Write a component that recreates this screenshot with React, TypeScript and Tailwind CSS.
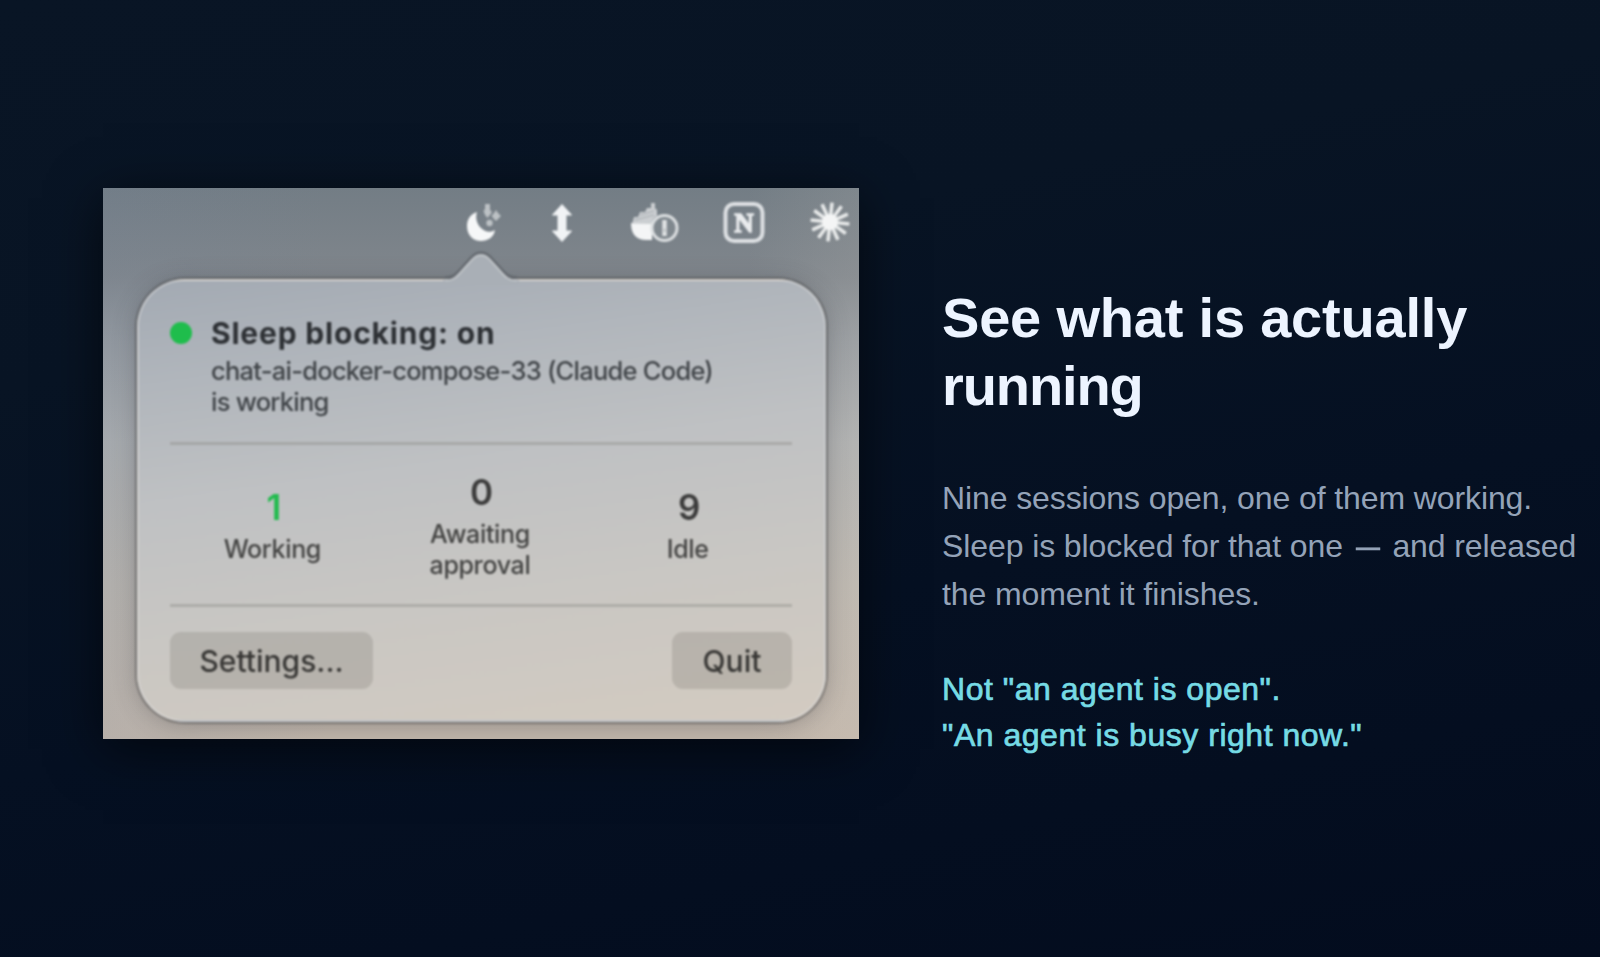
import type { ReactNode } from 'react';
import clsx from 'clsx';

interface Stat {
  value: number;
  label: string;
  active?: boolean;
}

const stats: Stat[] = [
  { value: 1, label: 'Working', active: true },
  { value: 0, label: 'Awaiting approval' },
  { value: 9, label: 'Idle' },
];

const rays = Array.from({ length: 12 }, (_, i) => i * 30 + 6);

function MoonIcon() {
  return (
    <svg width="36" height="38" viewBox="0 0 36 38" fill="#f6f7f8">
      <path d="M11 8 C4 10 1 16 1 22 C1 31 7 37 15 37 C22 37 28 33 29 26 C24 29 19 28 15 24 C11 20 9 14 11 8 Z" />
      <g opacity="0.55">
        <path d="M19 0 H24 V6 L26 8 L24 11 L21.500 14 L19 11 L17.500 7 L19 5 Z" />
        <path d="M30 6 L32 9 L35 12 L32 15 L30 17 L28 15 L25.500 12 L28 9 Z" />
        <circle cx="23.500" cy="19" r="3.200" />
      </g>
    </svg>
  );
}

function ArrowsIcon() {
  return (
    <svg width="24" height="40" viewBox="0 0 24 40" fill="#f1f3f5" stroke="#f1f3f5" strokeWidth="1" strokeLinejoin="round">
      <path d="M12 1.500 L21.500 12 H16 V28 H21.500 L12 38.500 L2.500 28 H8 V12 H2.500 Z" />
    </svg>
  );
}

function DockerIcon() {
  return (
    <svg width="50" height="42" viewBox="0 0 50 42">
      <path d="M1 21 C1 33 7 38 16 38 H22 V22 Z" fill="#f4f5f6" />
      <path d="M2 22 L4 15 H8 L10 10 H15 L17 6 H21 V1 H25 V6 L27 8 V14 C24 15 22 18 22 22 Z" fill="#d9dcde" opacity="0.85" />
      <path d="M5 18 L24 13 M10 13 L24 9" stroke="#8f959a" strokeWidth="1" opacity="0.6" />
      <circle cx="34.500" cy="26" r="12.500" fill="#8d9499" fillOpacity="0.4" stroke="#dcdfe1" strokeWidth="3" />
      <path d="M34.500 18 V34" stroke="#e0e2e3" strokeWidth="4.500" />
      <path d="M34.500 26.500 V30" stroke="#b9bec1" strokeWidth="2" />
    </svg>
  );
}

function NotionIcon() {
  return (
    <svg width="42" height="42" viewBox="0 0 42 42">
      <rect x="2.500" y="2" width="37" height="37" rx="8.500" fill="none" stroke="#dde0e3" strokeWidth="4" />
      <text x="21" y="29.500" textAnchor="middle" fontFamily="Liberation Serif, serif" fontWeight="700" fontSize="27" fill="#e9ebed" stroke="#e9ebed" strokeWidth="1.400">
        N
      </text>
    </svg>
  );
}

function BurstIcon() {
  return (
    <svg width="42" height="42" viewBox="0 0 42 42" stroke="#e8eaea" strokeWidth="3.600">
      {rays.map((deg) => (
        <line key={deg} x1="21" y1="20" x2="21" y2="0.500" transform={`rotate(${deg} 21 20)`} />
      ))}
      <circle cx="21" cy="20" r="8" fill="#f4f5f5" stroke="none" />
    </svg>
  );
}

function Divider() {
  return <div className="h-[3px] w-[622px] bg-[#8f8d89]/45" />;
}

function PanelButton({ className, children }: { className: string; children: ReactNode }) {
  return (
    <button className={clsx('h-[57px] rounded-[11px] bg-[#84807a]/30 pt-[2px] text-[30px] font-medium text-[#383735]', className)}>
      {children}
    </button>
  );
}

function Popover() {
  return (
    <div className="relative mt-[16px] ml-[34px] h-[443px] w-[689px] rounded-[48px] border-2 border-[#d9dad9]/50 bg-[linear-gradient(172deg,#a3aab3_0%,#b1b6bc_20%,#bfc1c3_42%,#c9c7c3_68%,#d3cbc1_100%)] px-[31px] shadow-[0_0_1px_2px_rgba(70,70,72,0.45),0_3px_24px_rgba(50,50,55,0.3)]">
      {/* Pointer towards the menu bar item */}
      <svg className="absolute -top-[30px] left-[300px]" width="84" height="34" viewBox="0 0 84 34">
        <path d="M4 34 V29 C14 29 16 26 22 19 L32 8 C38 1 46 1 52 8 L62 19 C68 26 70 29 80 29 V34 Z" fill="#a9afb6" />
        <path d="M6 26.500 C14 26.500 16 24 22 17.500 L32 6.500 C38 0 46 0 52 6.500 L62 17.500 C68 24 70 26.500 78 26.500" fill="none" stroke="#63686e" strokeWidth="2.400" />
        <path d="M6 29.500 C15 29.500 18 26 23 20 L33 9 C39 3 45 3 51 9 L61 20 C66 26 69 29.500 78 29.500" fill="none" stroke="#bcc0c4" strokeWidth="2" />
      </svg>

      <div className="flex h-[161px] items-start pt-[34px]">
        <span className="mt-[7px] size-[22px] rounded-full bg-[#1fbd4c]" />
        <div className="ml-[19px] text-[#2e3135]">
          <h2 className="text-[30px] leading-[36px] font-bold tracking-[0.8px]">Sleep blocking: on</h2>
          <p className="mt-[4px] w-[520px] text-[25.500px] leading-[31px] font-medium tracking-[-0.75px] text-[#404448]">
            chat-ai-docker-compose-33 (Claude Code) is working
          </p>
        </div>
      </div>

      <Divider />

      <div className="grid h-[159px] grid-cols-3 items-center">
        {stats.map((stat) => (
          <div key={stat.label} className="flex flex-col items-center pt-[4px] text-center">
            <span className={clsx('text-[35px] leading-[39px] font-semibold', stat.active ? 'text-[#22bb4e]' : 'text-[#3c3c3c]')}>
              {stat.value}
            </span>
            <span className="mt-[7px] -ml-[3px] w-[120px] text-[25px] leading-[31px] font-medium tracking-[-0.35px] text-[#444443]">
              {stat.label}
            </span>
          </div>
        ))}
      </div>

      <Divider />

      <div className="flex w-[622px] justify-between pt-[25px]">
        <PanelButton className="w-[203px]">Settings...</PanelButton>
        <PanelButton className="w-[120px]">Quit</PanelButton>
      </div>
    </div>
  );
}

export default function App() {
  return (
    <main className="flex h-[957px] w-[1600px] items-start overflow-hidden bg-[linear-gradient(168deg,#091525_0%,#081424_30%,#051022_60%,#030c1e_100%)] pt-[188px] pl-[103px]">
      <section className="h-[551px] w-[756px] shrink-0 overflow-hidden bg-[linear-gradient(to_right,rgba(110,130,160,0.12),transparent_30%,transparent_85%,rgba(235,225,210,0.1)),linear-gradient(180deg,#737d85_0%,#80868c_16%,#959a9f_28%,#acaeaf_46%,#bab5ae_72%,#c1b6ab_100%)] font-['Inter',sans-serif] shadow-[0_10px_50px_rgba(0,0,0,0.6)]">
        <div className="blur-[0.9px]">
          <div className="flex h-[75px] items-center pb-[6px] pl-[363px]">
            <MoonIcon />
            <div className="ml-[48px]"><ArrowsIcon /></div>
            <div className="ml-[56px]"><DockerIcon /></div>
            <div className="ml-[43px]"><NotionIcon /></div>
            <div className="ml-[44px]"><BurstIcon /></div>
          </div>
          <Popover />
        </div>
      </section>

      <section className="mt-[96px] ml-[83px] w-[650px] font-['Liberation_Sans',Arial,sans-serif]">
        <h1 className="w-[560px] text-[56px] leading-[68px] font-bold tracking-[-0.2px] text-[#edf4ff]">
          See what is actually <span className="tracking-[-1.1px]">running</span>
        </h1>
        <p className="mt-[54px] text-[32px] leading-[48px] tracking-[-0.1px] text-[#94a3b8]">
          Nine sessions open, one of them working.
          <br />
          Sleep is blocked for that one <span className="inline-block scale-x-75 [-webkit-text-stroke:0.6px_#94a3b8]">—</span> and released
          <br />
          the moment it finishes.
        </p>
        <p className="mt-[49px] text-[32px] leading-[45.500px] tracking-[0.52px] text-[#76dbe5] [-webkit-text-stroke:0.7px_#76dbe5]">
          Not "an agent is open".
          <br />
          "An agent is busy right now."
        </p>
      </section>
    </main>
  );
}
